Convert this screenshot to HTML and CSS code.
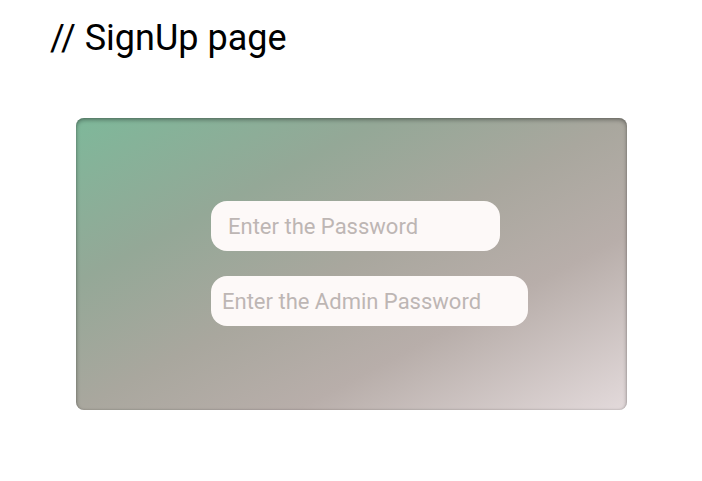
FILE: index.html
```html
<!DOCTYPE html>
<html>
<head>
<meta charset="utf-8">
<link rel="stylesheet" href="styles.css">
</head>
<body>
<h1 class="title">// SignUp page</h1>
<div class="card">
  <input class="field field-pass" type="password" placeholder="Enter the Password">
  <input class="field field-admin" type="password" placeholder="Enter the Admin Password">
</div>
</body>
</html>
```

FILE: styles.css
```css
html, body {
  margin: 0;
  padding: 0;
  background: #ffffff;
}
body {
  font-family: Roboto, "Liberation Sans", sans-serif;
  padding: 17px 0 0 50px;
}
.title {
  margin: 0;
  font-size: 36px;
  font-weight: 400;
  color: #000;
  line-height: 42px;
}
.card {
  margin: 59px 0 0 26px;
  width: 551px;
  height: 292px;
  box-sizing: border-box;
  border-radius: 8px;
  background: linear-gradient(to bottom right, #7eb89a 0%, #94a897 28%, #a9a79e 50%, #b8aeaa 70%, #e3dadb 100%);
  box-shadow: inset 0 2px 4px rgba(0,0,0,0.35), inset 0 0 2px rgba(0,0,0,0.18);
  display: flex;
  flex-direction: column;
  align-items: flex-start;
  padding: 83px 0 0 135px;
  gap: 25px;
}
.field {
  height: 50px;
  box-sizing: border-box;
  border: none;
  outline: none;
  border-radius: 16px;
  background: #fdf9f8;
  font-family: Roboto, "Liberation Sans", sans-serif;
  font-size: 22px;
  color: #333;
}
.field::placeholder {
  color: #bdb6b4;
}
.field-pass {
  width: 289px;
  padding: 0 0 0 17px;
}
.field-admin {
  width: 317px;
  padding: 0 0 0 11px;
}
```
